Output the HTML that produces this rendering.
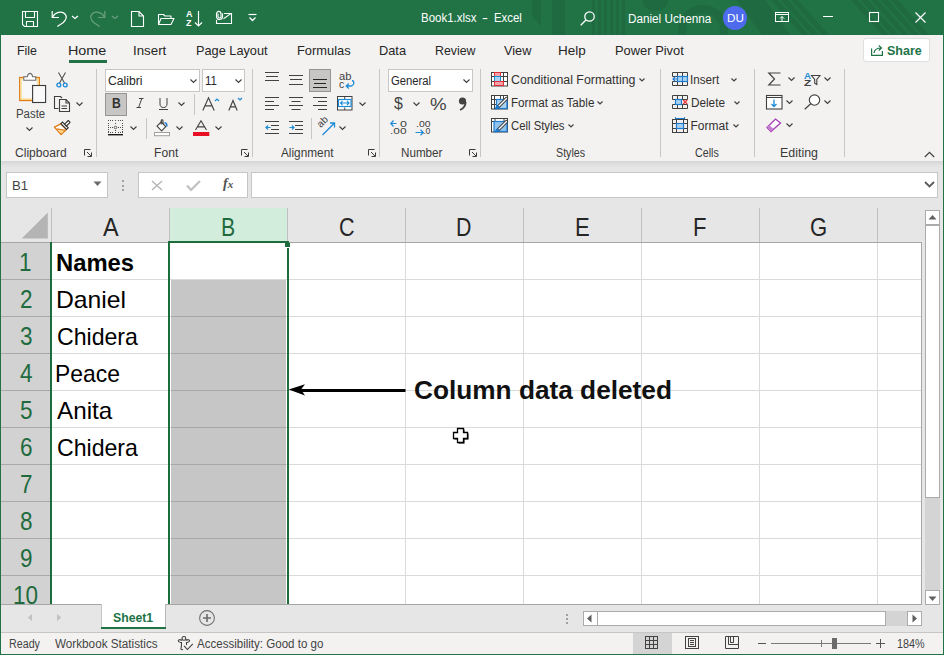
<!DOCTYPE html>
<html><head><meta charset="utf-8">
<style>
*{box-sizing:border-box;margin:0;padding:0}
html,body{width:944px;height:655px;overflow:hidden;background:#fff;font-family:"Liberation Sans",sans-serif;color:#262626;position:relative}
.a{position:absolute}
.t{white-space:nowrap}
svg{overflow:visible}
</style></head><body>

<div class="a" style="left:0px;top:0px;width:944px;height:35px;background:#217346;"></div>
<div class="a" style="left:1px;top:35px;width:942px;height:126px;background:#f3f2f1;"></div>
<div class="a" style="left:1px;top:161px;width:942px;height:47px;background:#e6e6e6;"></div>
<div class="a" style="left:1px;top:161px;width:942px;height:6px;background:linear-gradient(#d6d6d6,#e6e6e6);"></div>
<div class="a" style="left:1px;top:208px;width:942px;height:396px;background:#e6e6e6;"></div>
<div class="a" style="left:1px;top:604px;width:942px;height:28px;background:#e6e6e6;"></div>
<div class="a" style="left:1px;top:632px;width:942px;height:22px;background:#f3f2f1;"></div>
<svg class="a" style="left:0;top:0;overflow:hidden" width="944" height="35" viewBox="0 0 944 35">
<g fill="#1f6a40">
<path d="M532 0H541V26L532 16Z"/>
<rect x="552" y="0" width="13" height="35"/>
<rect x="592" y="0" width="3" height="35"/><rect x="598" y="0" width="3" height="35"/><rect x="604" y="0" width="3" height="35"/><rect x="610" y="0" width="3" height="35"/><rect x="616" y="0" width="3" height="35"/><rect x="622" y="0" width="3" height="35"/>
<path d="M642 0H668A13 11 0 0 1 642 0Z"/>
<path d="M737 0H765L790 35H762Z"/>
</g>
<g fill="none" stroke="#1f6a40" stroke-width="8"><circle cx="703" cy="30" r="21"/></g>
<g stroke="#1f6a40" stroke-width="5">
<path d="M770 -5L810 40 M780 -5L820 40 M790 -5L830 40 M850 -5L890 40 M860 -5L900 40 M870 -5L910 40 M880 -5L920 40 M890 -5L930 40"/>
</g>
</svg>
<svg class="a" style="left:22px;top:11px;" width="17" height="17" viewBox="0 0 17 17"><g fill="none" stroke="#ffffff" stroke-width="1.1"><path d="M0.5 0.5H15.5V15.5H2.5L0.5 13.5Z"/><path d="M3.5 0.5V6.5H12.5V0.5"/><path d="M4.5 15.5V10.5H11.5V15.5"/></g></svg>
<svg class="a" style="left:50px;top:10px;" width="20" height="18" viewBox="0 0 20 18"><g fill="none" stroke="#ffffff" stroke-width="1.2"><path d="M2.2 1V7.5H9"/><path d="M2.6 7.2C5 2 12 0.5 15 4C17.5 7 15.5 10.5 13 12.8L7.3 16.5"/></g></svg>
<svg class="a" style="left:71px;top:15px;" width="8" height="5" viewBox="0 0 8 5"><path d="M1 1L4 3.5L7 1" fill="none" stroke="#ffffff" stroke-width="1.3"/></svg>
<svg class="a" style="left:89px;top:10px;" width="20" height="18" viewBox="0 0 20 18"><g fill="none" stroke="#6a9e80" stroke-width="1.2"><path d="M15.8 1V7.5H9"/><path d="M15.4 7.2C13 2 6 0.5 3 4C0.5 7 2.5 10.5 5 12.8L10.7 16.5"/></g></svg>
<svg class="a" style="left:111px;top:15px;" width="8" height="5" viewBox="0 0 8 5"><path d="M1 1L4 3.5L7 1" fill="none" stroke="#6a9e80" stroke-width="1.3"/></svg>
<svg class="a" style="left:131px;top:11px;" width="13" height="17" viewBox="0 0 13 17"><path d="M0.5 0.5H8L12.5 5V15.5H0.5Z M8 0.5V5H12.5" fill="none" stroke="#ffffff" stroke-width="1.1"/></svg>
<svg class="a" style="left:158px;top:13px;" width="17" height="13" viewBox="0 0 17 13"><path d="M0.5 11.5V1.5H5.5L7 3H13V5.5 M0.5 11.5L3 5.5H16L13 11.5Z" fill="none" stroke="#ffffff" stroke-width="1.1" stroke-linejoin="round"/></svg>
<div class="a t" style="left:186px;top:10px;font-size:9px;line-height:9px;color:#fff;font-weight:bold">A</div>
<div class="a t" style="left:186px;top:19px;font-size:9px;line-height:9px;color:#fff;font-weight:bold">Z</div>
<svg class="a" style="left:194px;top:11px;" width="9" height="17" viewBox="0 0 9 17"><path d="M4.5 0V15 M1 11.5L4.5 15L8 11.5" fill="none" stroke="#ffffff" stroke-width="1.2"/></svg>
<svg class="a" style="left:216px;top:11px;" width="17" height="14" viewBox="0 0 17 14"><g fill="none" stroke="#ffffff" stroke-width="1.1"><path d="M8 2.5H15.5V12.5H0.5V9"/><path d="M7.5 7.8L14.8 2.6"/><path d="M6.5 2.3V5.5C6.5 7.5 5.3 8.5 3.5 8.5C1.7 8.5 0.5 7.5 0.5 5.5V3C0.5 1.2 1.5 0.4 2.8 0.4C4.1 0.4 5 1.2 5 3V5.6C5 6.5 4.4 7 3.5 7C2.6 7 2 6.5 2 5.6V2.5"/></g></svg>
<svg class="a" style="left:248px;top:13px;" width="9" height="9" viewBox="0 0 9 9"><path d="M0.5 1.5H8.5" stroke="#ffffff" stroke-width="1.2"/><path d="M1.5 4.5L4.5 7.5L7.5 4.5" fill="none" stroke="#ffffff" stroke-width="1.3"/></svg>
<div class="a t" style="left:420.78px;top:11.74px;font-size:12px;line-height:12px;color:#fff;transform:scaleX(0.9554);transform-origin:0 0;">Book1.xlsx</div>
<div class="a t" style="left:481.89px;top:11.74px;font-size:12px;line-height:12px;color:#fff;transform:scaleX(1.4966);transform-origin:0 0;">-</div>
<div class="a t" style="left:493.79px;top:11.74px;font-size:12px;line-height:12px;color:#fff;transform:scaleX(0.9493);transform-origin:0 0;">Excel</div>
<svg class="a" style="left:580px;top:11px;" width="15" height="15" viewBox="0 0 15 15"><g fill="none" stroke="#ffffff" stroke-width="1.3"><circle cx="9.5" cy="5.5" r="4.7"/><path d="M6.2 8.8L0.7 14.3"/></g></svg>
<div class="a t" style="left:628.46px;top:12.54px;font-size:12px;line-height:12px;color:#fff;transform:scaleX(0.9761);transform-origin:0 0;">Daniel Uchenna</div>
<div class="a" style="left:723px;top:6px;width:24px;height:24px;border-radius:50%;background:#4f6bed"></div>
<div class="a t" style="left:726.57px;top:13.19px;font-size:11px;line-height:11px;color:#fff;transform:scaleX(1.0612);transform-origin:0 0;">DU</div>
<svg class="a" style="left:775px;top:12px;" width="14" height="11" viewBox="0 0 14 11"><g fill="none" stroke="#ffffff" stroke-width="1"><rect x="0.5" y="0.5" width="13" height="9"/><path d="M0.5 2.5H13.5"/><path d="M7 9.5V4.5M5 6.5L7 4.5L9 6.5"/></g></svg>
<div class="a" style="left:823px;top:16px;width:10px;height:1px;background:#ffffff;"></div>
<svg class="a" style="left:869px;top:12px;" width="10" height="10" viewBox="0 0 10 10"><rect x="0.5" y="0.5" width="9" height="9" fill="none" stroke="#ffffff" stroke-width="1.1"/></svg>
<svg class="a" style="left:915px;top:12px;" width="11" height="11" viewBox="0 0 11 11"><path d="M0.5 0.5L10.5 10.5M10.5 0.5L0.5 10.5" stroke="#ffffff" stroke-width="1.2"/></svg>
<div class="a t" style="left:17.01px;top:44.19px;font-size:13px;line-height:13px;color:#262626;transform:scaleX(0.9499);transform-origin:0 0;">File</div>
<div class="a t" style="left:68.35px;top:44.19px;font-size:13px;line-height:13px;color:#262626;transform:scaleX(1.1032);transform-origin:0 0;">Home</div>
<div class="a" style="left:69px;top:60px;width:38px;height:3px;background:#217346;"></div>
<div class="a t" style="left:132.80px;top:44.19px;font-size:13px;line-height:13px;color:#262626;transform:scaleX(1.0235);transform-origin:0 0;">Insert</div>
<div class="a t" style="left:196.28px;top:44.19px;font-size:13px;line-height:13px;color:#262626;transform:scaleX(0.9807);transform-origin:0 0;">Page Layout</div>
<div class="a t" style="left:297.27px;top:44.19px;font-size:13px;line-height:13px;color:#262626;transform:scaleX(0.9902);transform-origin:0 0;">Formulas</div>
<div class="a t" style="left:379.48px;top:44.19px;font-size:13px;line-height:13px;color:#262626;transform:scaleX(0.9852);transform-origin:0 0;">Data</div>
<div class="a t" style="left:435.31px;top:44.19px;font-size:13px;line-height:13px;color:#262626;transform:scaleX(0.9495);transform-origin:0 0;">Review</div>
<div class="a t" style="left:503.94px;top:44.19px;font-size:13px;line-height:13px;color:#262626;transform:scaleX(0.9790);transform-origin:0 0;">View</div>
<div class="a t" style="left:558.42px;top:44.19px;font-size:13px;line-height:13px;color:#262626;transform:scaleX(1.0376);transform-origin:0 0;">Help</div>
<div class="a t" style="left:615.37px;top:44.19px;font-size:13px;line-height:13px;color:#262626;transform:scaleX(0.9919);transform-origin:0 0;">Power Pivot</div>
<div class="a" style="left:863px;top:38px;width:67px;height:24px;background:#fff;border:1px solid #e1dfdd;border-radius:3px"></div>
<svg class="a" style="left:871px;top:44px;" width="12" height="12" viewBox="0 0 12 12"><g fill="none" stroke="#217346" stroke-width="1.2"><path d="M0.6 4.5V11.4H11.4V7"/><path d="M3 9C3.5 5.5 6 4 10 4 M7.8 1.5L10.5 4L7.8 6.5"/></g></svg>
<div class="a t" style="left:886.62px;top:44.09px;font-size:13px;line-height:13px;color:#217346;font-weight:bold;transform:scaleX(0.9615);transform-origin:0 0;">Share</div>
<div class="a" style="left:96px;top:69px;width:1px;height:88px;background:#c8c6c4;"></div>
<div class="a" style="left:252px;top:69px;width:1px;height:88px;background:#c8c6c4;"></div>
<div class="a" style="left:379px;top:69px;width:1px;height:88px;background:#c8c6c4;"></div>
<div class="a" style="left:480px;top:69px;width:1px;height:88px;background:#c8c6c4;"></div>
<div class="a" style="left:660px;top:69px;width:1px;height:88px;background:#c8c6c4;"></div>
<div class="a" style="left:754px;top:69px;width:1px;height:88px;background:#c8c6c4;"></div>
<div class="a" style="left:844px;top:69px;width:1px;height:88px;background:#c8c6c4;"></div>
<svg class="a" style="left:18px;top:72px;" width="29" height="31" viewBox="0 0 29 31"><rect x="1.7" y="5.5" width="19.6" height="23" fill="#f8f8f8" stroke="#e07b16" stroke-width="1.3"/><rect x="3" y="6.8" width="17" height="20.4" fill="none" stroke="#fbd77f" stroke-width="1.3"/><path d="M5.8 8.2V4.8H9.3C9.8 2.2 10.8 1.4 12 1.4C13.2 1.4 14.2 2.2 14.7 4.8H17.8V8.2Z" fill="#fff" stroke="#6e6e6e" stroke-width="1.1"/><rect x="14.6" y="13.5" width="13" height="17" fill="#f9f9f9" stroke="#3a3a3a" stroke-width="1.1"/></svg>
<div class="a t" style="left:15.59px;top:107.54px;font-size:12px;line-height:12px;color:#424242;transform:scaleX(0.9514);transform-origin:0 0;">Paste</div>
<svg class="a" style="left:26.0px;top:127.25px;" width="7" height="4.5" viewBox="0 0 7 4.5"><path d="M0.5 0.5L3.5 3.5L6.5 0.5" fill="none" stroke="#424242" stroke-width="1.2"/></svg>
<svg class="a" style="left:56px;top:72px;" width="12" height="16" viewBox="0 0 12 16"><g fill="none" stroke="#505050" stroke-width="1.1"><path d="M2.5 0.5L8.5 11M9.5 0.5L3.5 11"/></g><g fill="none" stroke="#1e8bd6" stroke-width="1.4"><circle cx="2.8" cy="13" r="1.9"/><circle cx="9.2" cy="13" r="1.9"/></g></svg>
<svg class="a" style="left:54px;top:96px;" width="17" height="16" viewBox="0 0 17 16"><g fill="none" stroke="#404040" stroke-width="1.1"><path d="M4.5 12.5H0.5V0.5H6.5L8 2"/><path d="M5.5 3.5H12L15.5 7V15.5H5.5Z"/><path d="M12 3.5V7H15.5"/><path d="M7.5 10H13M7.5 12.5H13"/></g></svg>
<svg class="a" style="left:75.5px;top:102.25px;" width="7" height="4.5" viewBox="0 0 7 4.5"><path d="M0.5 0.5L3.5 3.5L6.5 0.5" fill="none" stroke="#424242" stroke-width="1.2"/></svg>
<svg class="a" style="left:50px;top:116px;" width="22" height="20" viewBox="0 0 22 20"><path d="M4.4 11.1L11.1 18.5L16.4 13.6L10.7 7.9Z" fill="#fff" stroke="#e07b16" stroke-width="1.3" stroke-linejoin="round"/><path d="M8.3 14.2L11.1 17.4L14.3 14.6Z" fill="#ffd47a"/><path d="M6.5 12.8L15.2 14.3" stroke="#e07b16" stroke-width="1.2"/><path d="M10.9 7.7L12.5 6.1L18.2 11.8L16.6 13.4Z" fill="#fff" stroke="#333" stroke-width="1.1"/><path d="M14.6 8.2L18.3 4.5L20.1 6.3L16.4 10Z" fill="#fff" stroke="#333" stroke-width="1.1" stroke-linejoin="round"/></svg>
<div class="a t" style="left:14.70px;top:146.64px;font-size:12px;line-height:12px;color:#3b3a39;transform:scaleX(1.0052);transform-origin:0 0;">Clipboard</div>
<svg class="a" style="left:84px;top:149px;" width="9" height="9" viewBox="0 0 9 9"><g fill="none" stroke="#3a3a3a" stroke-width="1"><path d="M0.5 6.5V0.5H6.5"/><path d="M3 3L7 7M7.5 3.5V7.5H3.5"/></g></svg>
<div class="a" style="left:105px;top:69px;width:95px;height:23px;background:#fff;border:1px solid #c8c6c4"></div>
<div class="a t" style="left:107.79px;top:75.04px;font-size:12px;line-height:12px;color:#262626;transform:scaleX(1.0160);transform-origin:0 0;">Calibri</div>
<svg class="a" style="left:190.0px;top:78.75px;" width="7" height="4.5" viewBox="0 0 7 4.5"><path d="M0.5 0.5L3.5 3.5L6.5 0.5" fill="none" stroke="#424242" stroke-width="1.2"/></svg>
<div class="a" style="left:202px;top:69px;width:43px;height:23px;background:#fff;border:1px solid #c8c6c4"></div>
<div class="a t" style="left:204.64px;top:75.04px;font-size:12px;line-height:12px;color:#262626;transform:scaleX(0.9563);transform-origin:0 0;">11</div>
<svg class="a" style="left:234.9px;top:78.75px;" width="7" height="4.5" viewBox="0 0 7 4.5"><path d="M0.5 0.5L3.5 3.5L6.5 0.5" fill="none" stroke="#424242" stroke-width="1.2"/></svg>
<div class="a" style="left:105px;top:93px;width:22px;height:23px;background:#c8c6c4;border:1px solid #979593"></div>
<div class="a t" style="left:111.71px;top:96.15px;font-size:14px;line-height:14px;color:#323130;font-weight:bold;transform:scaleX(0.8711);transform-origin:0 0;">B</div>
<svg class="a" style="left:136px;top:97px;" width="8" height="12" viewBox="0 0 8 12"><path d="M3 1.5H7.5 M0.5 10.5H5 M5.8 1.5L2.6 10.5" fill="none" stroke="#424242" stroke-width="1"/></svg>
<svg class="a" style="left:159px;top:97px;" width="10" height="14" viewBox="0 0 10 14"><path d="M1 1V7C1 9.3 2.3 10.5 4.5 10.5C6.7 10.5 8 9.3 8 7V1" fill="none" stroke="#424242" stroke-width="1"/><path d="M0 12.5H9" stroke="#424242" stroke-width="1"/></svg>
<svg class="a" style="left:178.1px;top:102.25px;" width="7" height="4.5" viewBox="0 0 7 4.5"><path d="M0.5 0.5L3.5 3.5L6.5 0.5" fill="none" stroke="#424242" stroke-width="1.2"/></svg>
<div class="a" style="left:194px;top:94px;width:1px;height:21px;background:#c8c6c4;"></div>
<svg class="a" style="left:202px;top:97px;" width="18" height="14" viewBox="0 0 18 14"><path d="M0.8 13.5L6.5 0.8L12.2 13.5M3 8.8H10" fill="none" stroke="#424242" stroke-width="1.15"/><path d="M13 4L15 2L17 4" fill="none" stroke="#1e8bd6" stroke-width="1.2"/></svg>
<svg class="a" style="left:228px;top:97px;" width="15" height="14" viewBox="0 0 15 14"><path d="M0.8 13.5L5 3.5L9.2 13.5M2.5 9.8H7.5" fill="none" stroke="#424242" stroke-width="1.15"/><path d="M10 1L12 3L14 1" fill="none" stroke="#1e8bd6" stroke-width="1.2"/></svg>
<svg class="a" style="left:108px;top:120px;" width="16" height="16" viewBox="0 0 16 16"><g fill="#505050"><rect x="0" y="0" width="1" height="1"/><rect x="2" y="0" width="1" height="1"/><rect x="4" y="0" width="1" height="1"/><rect x="7" y="0" width="1" height="1"/><rect x="10" y="0" width="1" height="1"/><rect x="12" y="0" width="1" height="1"/><rect x="14" y="0" width="1" height="1"/><rect x="0" y="3" width="1" height="1"/><rect x="0" y="5" width="1" height="1"/><rect x="0" y="9" width="1" height="1"/><rect x="0" y="11" width="1" height="1"/><rect x="14" y="3" width="1" height="1"/><rect x="14" y="5" width="1" height="1"/><rect x="14" y="9" width="1" height="1"/><rect x="14" y="11" width="1" height="1"/><rect x="7" y="3" width="1" height="1"/><rect x="7" y="10" width="1" height="1"/><rect x="7" y="12" width="1" height="1"/><rect x="2" y="7" width="1" height="1"/><rect x="4" y="7" width="1" height="1"/><rect x="10" y="7" width="1" height="1"/><rect x="12" y="7" width="1" height="1"/><rect x="0" y="7" width="1" height="1"/><rect x="14" y="7" width="1" height="1"/><rect x="2" y="12" width="1" height="1"/><rect x="4" y="12" width="1" height="1"/><rect x="10" y="12" width="1" height="1"/><rect x="12" y="12" width="1" height="1"/><rect x="0" y="12" width="1" height="1"/><rect x="14" y="12" width="1" height="1"/></g><circle cx="7.5" cy="7.5" r="1.3" fill="none" stroke="#505050" stroke-width="0.9"/><rect x="0" y="14" width="15" height="1.4" fill="#1a1a1a"/></svg>
<svg class="a" style="left:129.8px;top:125.75px;" width="7" height="4.5" viewBox="0 0 7 4.5"><path d="M0.5 0.5L3.5 3.5L6.5 0.5" fill="none" stroke="#424242" stroke-width="1.2"/></svg>
<div class="a" style="left:146px;top:118px;width:1px;height:21px;background:#c8c6c4;"></div>
<svg class="a" style="left:154px;top:119px;" width="17" height="18" viewBox="0 0 17 18"><path d="M3 7.2L7.2 3L11.8 7.6L7.6 11.8Z" fill="#fff" stroke="#404040" stroke-width="1.1" stroke-linejoin="round"/><path d="M7.2 5.5V1.7C7.2 0.6 9 0.6 9 1.7V5" fill="none" stroke="#404040" stroke-width="1.1"/><path d="M10.5 4C12.5 3.5 13 5.5 12.8 7.5" fill="none" stroke="#1e7bd0" stroke-width="1.5"/><rect x="0.5" y="13.5" width="15" height="3.2" fill="#fff" stroke="#a19f9d" stroke-width="1"/></svg>
<svg class="a" style="left:175.9px;top:125.75px;" width="7" height="4.5" viewBox="0 0 7 4.5"><path d="M0.5 0.5L3.5 3.5L6.5 0.5" fill="none" stroke="#424242" stroke-width="1.2"/></svg>
<svg class="a" style="left:193px;top:120px;" width="17" height="17" viewBox="0 0 17 17"><path d="M2.5 10L8 0.8L13.5 10M4.5 6.8H11.5" fill="none" stroke="#424242" stroke-width="1.15"/><rect x="0" y="12" width="16.3" height="4" fill="#e81123"/></svg>
<svg class="a" style="left:214.9px;top:125.75px;" width="7" height="4.5" viewBox="0 0 7 4.5"><path d="M0.5 0.5L3.5 3.5L6.5 0.5" fill="none" stroke="#424242" stroke-width="1.2"/></svg>
<div class="a t" style="left:153.53px;top:146.64px;font-size:12px;line-height:12px;color:#3b3a39;transform:scaleX(1.0096);transform-origin:0 0;">Font</div>
<svg class="a" style="left:241px;top:149px;" width="9" height="9" viewBox="0 0 9 9"><g fill="none" stroke="#3a3a3a" stroke-width="1"><path d="M0.5 6.5V0.5H6.5"/><path d="M3 3L7 7M7.5 3.5V7.5H3.5"/></g></svg>
<svg class="a" style="left:265px;top:72px;" width="15" height="12" viewBox="0 0 15 12"><rect x="0" y="0" width="14" height="1" fill="#424242"/><rect x="1" y="4" width="12" height="1" fill="#424242"/><rect x="0" y="8" width="14" height="1" fill="#424242"/></svg>
<svg class="a" style="left:289px;top:75px;" width="15" height="12" viewBox="0 0 15 12"><rect x="0" y="0" width="14" height="1" fill="#424242"/><rect x="1" y="4" width="12" height="1" fill="#424242"/><rect x="0" y="9" width="14" height="1" fill="#424242"/></svg>
<div class="a" style="left:309px;top:69px;width:22px;height:23px;background:#c8c6c4;border:1px solid #979593"></div>
<svg class="a" style="left:313px;top:79px;" width="15" height="12" viewBox="0 0 15 12"><rect x="0" y="0" width="14" height="1" fill="#262626"/><rect x="1" y="4" width="12" height="1" fill="#262626"/><rect x="0" y="8" width="14" height="1" fill="#262626"/></svg>
<div class="a t" style="left:339.05px;top:71.53px;font-size:10px;line-height:10px;color:#424242;transform:scaleX(1.1165);transform-origin:0 0;">ab</div>
<div class="a t" style="left:339.09px;top:79.53px;font-size:10px;line-height:10px;color:#424242;transform:scaleX(1.0345);transform-origin:0 0;">c</div>
<svg class="a" style="left:345px;top:80px;" width="10" height="9" viewBox="0 0 10 9"><path d="M7 0.5C9.5 1 9.5 5 6.5 6H1.5 M3.8 3.5L1.2 6L3.8 8.5" fill="none" stroke="#1e8bd6" stroke-width="1.3"/></svg>
<svg class="a" style="left:265px;top:97px;" width="15" height="15" viewBox="0 0 15 15"><rect x="0" y="0" width="14" height="1" fill="#424242"/><rect x="0" y="4" width="9" height="1" fill="#424242"/><rect x="0" y="8" width="14" height="1" fill="#424242"/><rect x="0" y="12" width="9" height="1" fill="#424242"/></svg>
<svg class="a" style="left:289px;top:97px;" width="15" height="15" viewBox="0 0 15 15"><rect x="0" y="0" width="14" height="1" fill="#424242"/><rect x="2.5" y="4" width="9" height="1" fill="#424242"/><rect x="0" y="8" width="14" height="1" fill="#424242"/><rect x="2.5" y="12" width="9" height="1" fill="#424242"/></svg>
<svg class="a" style="left:313px;top:97px;" width="15" height="15" viewBox="0 0 15 15"><rect x="0" y="0" width="14" height="1" fill="#424242"/><rect x="5" y="4" width="9" height="1" fill="#424242"/><rect x="0" y="8" width="14" height="1" fill="#424242"/><rect x="5" y="12" width="9" height="1" fill="#424242"/></svg>
<svg class="a" style="left:337px;top:96px;" width="16" height="15" viewBox="0 0 16 15"><rect x="0.5" y="0.5" width="14.5" height="13.5" fill="#fff" stroke="#404040" stroke-width="1"/><path d="M7.75 0.5V3 M7.75 11.5V14" stroke="#404040"/><rect x="1.5" y="3.5" width="12.5" height="7" fill="none" stroke="#1e8bd6" stroke-width="1.2"/><path d="M3.5 7H12 M5.5 5L3.5 7L5.5 9 M10 5L12 7L10 9" fill="none" stroke="#1e8bd6" stroke-width="1.1"/></svg>
<svg class="a" style="left:359.2px;top:102.25px;" width="7" height="4.5" viewBox="0 0 7 4.5"><path d="M0.5 0.5L3.5 3.5L6.5 0.5" fill="none" stroke="#424242" stroke-width="1.2"/></svg>
<svg class="a" style="left:265px;top:121px;" width="15" height="14" viewBox="0 0 15 14"><rect x="0" y="0" width="14" height="1" fill="#424242"/><rect x="6" y="4" width="8" height="1" fill="#424242"/><rect x="6" y="8" width="8" height="1" fill="#424242"/><rect x="0" y="12" width="14" height="1" fill="#424242"/><path d="M1 6.5H5.5 M3 4.5L1 6.5L3 8.5" fill="none" stroke="#1e8bd6" stroke-width="1.2"/></svg>
<svg class="a" style="left:289px;top:121px;" width="15" height="14" viewBox="0 0 15 14"><rect x="0" y="0" width="14" height="1" fill="#424242"/><rect x="6" y="4" width="8" height="1" fill="#424242"/><rect x="6" y="8" width="8" height="1" fill="#424242"/><rect x="0" y="12" width="14" height="1" fill="#424242"/><path d="M0.5 6.5H5 M3 4.5L5 6.5L3 8.5" fill="none" stroke="#1e8bd6" stroke-width="1.2"/></svg>
<div class="a" style="left:311px;top:118px;width:1px;height:21px;background:#c8c6c4;"></div>
<div class="a t" style="left:317px;top:117px;font-size:10px;line-height:10px;color:#424242;transform:rotate(-45deg);transform-origin:50% 50%">ab</div>
<svg class="a" style="left:322px;top:122px;" width="14" height="14" viewBox="0 0 14 14"><path d="M0.5 13L12.5 1 M8 1H12.5V5.5" fill="none" stroke="#1e8bd6" stroke-width="1.3"/></svg>
<svg class="a" style="left:338.9px;top:125.75px;" width="7" height="4.5" viewBox="0 0 7 4.5"><path d="M0.5 0.5L3.5 3.5L6.5 0.5" fill="none" stroke="#424242" stroke-width="1.2"/></svg>
<div class="a t" style="left:281.30px;top:146.64px;font-size:12px;line-height:12px;color:#3b3a39;transform:scaleX(0.9835);transform-origin:0 0;">Alignment</div>
<svg class="a" style="left:368px;top:149px;" width="9" height="9" viewBox="0 0 9 9"><g fill="none" stroke="#3a3a3a" stroke-width="1"><path d="M0.5 6.5V0.5H6.5"/><path d="M3 3L7 7M7.5 3.5V7.5H3.5"/></g></svg>
<div class="a" style="left:388px;top:69px;width:85px;height:23px;background:#fff;border:1px solid #c8c6c4"></div>
<div class="a t" style="left:391.14px;top:75.34px;font-size:12px;line-height:12px;color:#262626;transform:scaleX(0.9399);transform-origin:0 0;">General</div>
<svg class="a" style="left:462.9px;top:78.75px;" width="7" height="4.5" viewBox="0 0 7 4.5"><path d="M0.5 0.5L3.5 3.5L6.5 0.5" fill="none" stroke="#424242" stroke-width="1.2"/></svg>
<div class="a t" style="left:394.14px;top:95.95px;font-size:16px;line-height:16px;color:#424242;transform:scaleX(0.9906);transform-origin:0 0;">$</div>
<svg class="a" style="left:413.0px;top:102.25px;" width="7" height="4.5" viewBox="0 0 7 4.5"><path d="M0.5 0.5L3.5 3.5L6.5 0.5" fill="none" stroke="#424242" stroke-width="1.2"/></svg>
<div class="a t" style="left:429.55px;top:97.05px;font-size:16px;line-height:16px;color:#424242;transform:scaleX(1.1662);transform-origin:0 0;">%</div>
<svg class="a" style="left:458px;top:97px;" width="9" height="14" viewBox="0 0 9 14"><circle cx="4.5" cy="4" r="3.6" fill="#424242"/><path d="M7.6 5C7.6 9 5.5 11.5 2 13" fill="none" stroke="#424242" stroke-width="1.8"/></svg>
<svg class="a" style="left:390px;top:119px;" width="17" height="17" viewBox="0 0 17 17"><path d="M1 4.5H6.5 M3.5 1.5L0.8 4.5L3.5 7.5" fill="none" stroke="#1e8bd6" stroke-width="1.2"/></svg>
<div class="a t" style="left:400.00px;top:119.88px;font-size:9px;line-height:9px;color:#424242;transform:scaleX(1.3889);transform-origin:0 0;">0</div>
<div class="a t" style="left:390.43px;top:127.38px;font-size:9px;line-height:9px;color:#424242;transform:scaleX(1.3175);transform-origin:0 0;">.00</div>
<div class="a t" style="left:416.06px;top:119.88px;font-size:9px;line-height:9px;color:#424242;transform:scaleX(1.1594);transform-origin:0 0;">.00</div>
<svg class="a" style="left:415px;top:129px;" width="12" height="8" viewBox="0 0 12 8"><path d="M0.5 3.5H8 M5.5 0.8L8.3 3.5L5.5 6.2" fill="none" stroke="#1e8bd6" stroke-width="1.2"/></svg>
<div class="a t" style="left:423.21px;top:127.38px;font-size:9px;line-height:9px;color:#424242;transform:scaleX(0.9703);transform-origin:0 0;">.0</div>
<div class="a t" style="left:400.67px;top:146.64px;font-size:12px;line-height:12px;color:#3b3a39;transform:scaleX(0.9716);transform-origin:0 0;">Number</div>
<svg class="a" style="left:469px;top:149px;" width="9" height="9" viewBox="0 0 9 9"><g fill="none" stroke="#3a3a3a" stroke-width="1"><path d="M0.5 6.5V0.5H6.5"/><path d="M3 3L7 7M7.5 3.5V7.5H3.5"/></g></svg>
<svg class="a" style="left:491px;top:72px;" width="17" height="15" viewBox="0 0 17 15"><rect x="0.5" y="0.5" width="16" height="13.5" fill="#fff" stroke="#404040" stroke-width="1"/><path d="M0.5 4.5H16 M0.5 9.5H16 M3.5 0.5V14 M9.5 0.5V14 M12.5 0.5V14" stroke="#404040" stroke-width="1" fill="none"/><rect x="3.5" y="0.5" width="6" height="4" fill="#f4a0a8" stroke="#e02f3a" stroke-width="1"/><rect x="3.5" y="4.5" width="6" height="5" fill="#a9d2f2" stroke="#1e8bd6" stroke-width="1"/><rect x="3.5" y="9.5" width="9" height="4" fill="#f4a0a8" stroke="#e02f3a" stroke-width="1"/></svg>
<div class="a t" style="left:510.88px;top:73.84px;font-size:12px;line-height:12px;color:#323130;transform:scaleX(1.0310);transform-origin:0 0;">Conditional Formatting</div>
<svg class="a" style="left:638.8px;top:77.5px;" width="6" height="4.0" viewBox="0 0 6 4.0"><path d="M0.5 0.5L3.0 3.0L5.5 0.5" fill="none" stroke="#424242" stroke-width="1.2"/></svg>
<svg class="a" style="left:491px;top:95px;" width="17" height="15" viewBox="0 0 17 15"><rect x="0.5" y="0.5" width="16" height="13.5" fill="#fff" stroke="#404040" stroke-width="1"/><path d="M0.5 4.5H16 M0.5 9.5H16 M3.5 0.5V14 M9.5 0.5V14 M12.5 0.5V14" stroke="#404040" stroke-width="1" fill="none"/><rect x="5.5" y="4.5" width="10.5" height="9" fill="#a9d2f2" stroke="#1e7bd0" stroke-width="1.2"/><path d="M15.5 3.5L7 12" stroke="#404040" stroke-width="3.2" stroke-linecap="round"/><path d="M15.5 3.5L7 12" stroke="#fff" stroke-width="1.2" stroke-linecap="round"/><path d="M7.5 10.5C5 10.5 4.5 12 3.5 14.5C5.5 14.5 8.5 14 8.5 11.5Z" fill="#1e7bd0"/></svg>
<div class="a t" style="left:510.57px;top:96.84px;font-size:12px;line-height:12px;color:#323130;transform:scaleX(0.9720);transform-origin:0 0;">Format as Table</div>
<svg class="a" style="left:596.8px;top:100.5px;" width="6" height="4.0" viewBox="0 0 6 4.0"><path d="M0.5 0.5L3.0 3.0L5.5 0.5" fill="none" stroke="#424242" stroke-width="1.2"/></svg>
<svg class="a" style="left:491px;top:118px;" width="17" height="15" viewBox="0 0 17 15"><rect x="0.5" y="0.5" width="16" height="13.5" fill="#fff" stroke="#404040" stroke-width="1"/><path d="M0.5 3.5H16" stroke="#404040"/><path d="M4 0.5V3.5M13 0.5V3.5" stroke="#404040"/><rect x="3" y="3.5" width="13" height="10" fill="#8ec4ee" stroke="#1e7bd0" stroke-width="1.2"/><path d="M15.5 3.5L7 12" stroke="#404040" stroke-width="3.2" stroke-linecap="round"/><path d="M15.5 3.5L7 12" stroke="#fff" stroke-width="1.2" stroke-linecap="round"/><path d="M7.5 10.5C5 10.5 4.5 12 3.5 14.5C5.5 14.5 8.5 14 8.5 11.5Z" fill="#1e7bd0"/></svg>
<div class="a t" style="left:510.93px;top:119.84px;font-size:12px;line-height:12px;color:#323130;transform:scaleX(0.9429);transform-origin:0 0;">Cell Styles</div>
<svg class="a" style="left:568.2px;top:123.5px;" width="6" height="4.0" viewBox="0 0 6 4.0"><path d="M0.5 0.5L3.0 3.0L5.5 0.5" fill="none" stroke="#424242" stroke-width="1.2"/></svg>
<div class="a t" style="left:555.82px;top:146.64px;font-size:12px;line-height:12px;color:#3b3a39;transform:scaleX(0.8916);transform-origin:0 0;">Styles</div>
<svg class="a" style="left:672px;top:72px;" width="16" height="14" viewBox="0 0 16 14"><g fill="none" stroke="#404040" stroke-width="1"><path d="M0.5 4.5V0.5H15.5V13.5H0.5V9.5 M0.5 4.5H15.5 M0.5 9.5H15.5 M5.5 0.5V4.5 M10.5 0.5V4.5 M5.5 9.5V13.5 M10.5 9.5V13.5"/></g><rect x="5.5" y="4.5" width="10" height="5" fill="#a9d2f2" stroke="#1e7bd0" stroke-width="1.2"/><path d="M10.5 4.5V9.5" stroke="#1e7bd0"/><path d="M1 7H6 M3.6 4.4L1 7L3.6 9.6" fill="none" stroke="#1e7bd0" stroke-width="1.2"/></svg>
<div class="a t" style="left:690.45px;top:73.64px;font-size:12px;line-height:12px;color:#323130;transform:scaleX(0.9702);transform-origin:0 0;">Insert</div>
<svg class="a" style="left:730.7px;top:77.5px;" width="6" height="4.0" viewBox="0 0 6 4.0"><path d="M0.5 0.5L3.0 3.0L5.5 0.5" fill="none" stroke="#424242" stroke-width="1.2"/></svg>
<svg class="a" style="left:672px;top:95px;" width="16" height="14" viewBox="0 0 16 14"><g fill="none" stroke="#404040" stroke-width="1"><path d="M0.5 4.5V0.5H15.5V4.5 M0.5 9.5V13.5H15.5V9.5 M0.5 4.5H15.5 M0.5 9.5H15.5 M5.5 0.5V4.5 M10.5 0.5V4.5 M5.5 9.5V13.5 M10.5 9.5V13.5"/></g><rect x="3.5" y="4.5" width="6" height="5" fill="#a9d2f2" stroke="#1e7bd0" stroke-width="1.2"/><path d="M11.2 5L15.2 9 M15.2 5L11.2 9" stroke="#e8383d" stroke-width="1.3"/></svg>
<div class="a t" style="left:690.56px;top:96.64px;font-size:12px;line-height:12px;color:#323130;transform:scaleX(0.9777);transform-origin:0 0;">Delete</div>
<svg class="a" style="left:734.3px;top:100.5px;" width="6" height="4.0" viewBox="0 0 6 4.0"><path d="M0.5 0.5L3.0 3.0L5.5 0.5" fill="none" stroke="#424242" stroke-width="1.2"/></svg>
<svg class="a" style="left:672px;top:117px;" width="16" height="16" viewBox="0 0 16 16"><path d="M3 1.5H13 M3.5 0V3 M12.5 0V3" stroke="#1e7bd0" stroke-width="1"/><g fill="none" stroke="#404040" stroke-width="1"><rect x="0.5" y="2.5" width="15" height="13"/><path d="M0.5 6.5H15.5 M0.5 11.5H15.5 M4.5 2.5V15.5 M11.5 2.5V15.5"/></g><rect x="4.5" y="6.5" width="7" height="5" fill="#a9d2f2" stroke="#1e7bd0" stroke-width="1.2"/></svg>
<div class="a t" style="left:690.54px;top:119.84px;font-size:12px;line-height:12px;color:#323130;">Format</div>
<svg class="a" style="left:732.5px;top:123.5px;" width="6" height="4.0" viewBox="0 0 6 4.0"><path d="M0.5 0.5L3.0 3.0L5.5 0.5" fill="none" stroke="#424242" stroke-width="1.2"/></svg>
<div class="a t" style="left:694.96px;top:146.64px;font-size:12px;line-height:12px;color:#3b3a39;transform:scaleX(0.8917);transform-origin:0 0;">Cells</div>
<svg class="a" style="left:768px;top:72px;" width="13" height="14" viewBox="0 0 13 14"><path d="M12.5 1H0.8L6.5 7L0.8 13H12.5" fill="none" stroke="#424242" stroke-width="1.2"/></svg>
<svg class="a" style="left:787.7px;top:77.25px;" width="7" height="4.5" viewBox="0 0 7 4.5"><path d="M0.5 0.5L3.5 3.5L6.5 0.5" fill="none" stroke="#424242" stroke-width="1.2"/></svg>
<div class="a t" style="left:804.26px;top:71.88px;font-size:9px;line-height:9px;color:#1e8bd6;font-weight:bold;transform:scaleX(1.0779);transform-origin:0 0;">A</div>
<div class="a t" style="left:803.65px;top:79.38px;font-size:9px;line-height:9px;color:#424242;font-weight:bold;transform:scaleX(1.3013);transform-origin:0 0;">Z</div>
<svg class="a" style="left:811px;top:75px;" width="10" height="10" viewBox="0 0 10 10"><path d="M0.5 0.5H9L5.8 4.5V9.5L3.7 8.2V4.5Z" fill="none" stroke="#424242" stroke-width="1.1"/></svg>
<svg class="a" style="left:824.1px;top:77.25px;" width="7" height="4.5" viewBox="0 0 7 4.5"><path d="M0.5 0.5L3.5 3.5L6.5 0.5" fill="none" stroke="#424242" stroke-width="1.2"/></svg>
<svg class="a" style="left:766px;top:95px;" width="17" height="15" viewBox="0 0 17 15"><rect x="0.5" y="0.5" width="15.5" height="13.5" fill="#fff" stroke="#404040" stroke-width="1.1"/><path d="M0.5 2.5H16" stroke="#404040"/><path d="M8 4.5V11.5 M5.5 9L8 11.5L10.5 9" fill="none" stroke="#1e8bd6" stroke-width="1.3"/></svg>
<svg class="a" style="left:785.9px;top:100.25px;" width="7" height="4.5" viewBox="0 0 7 4.5"><path d="M0.5 0.5L3.5 3.5L6.5 0.5" fill="none" stroke="#424242" stroke-width="1.2"/></svg>
<svg class="a" style="left:804px;top:94px;" width="17" height="16" viewBox="0 0 17 16"><circle cx="10.5" cy="6" r="5.2" fill="#fff" stroke="#424242" stroke-width="1.15"/><path d="M7 9.5L0.7 15.3" stroke="#424242" stroke-width="1.2"/></svg>
<svg class="a" style="left:824.1px;top:100.25px;" width="7" height="4.5" viewBox="0 0 7 4.5"><path d="M0.5 0.5L3.5 3.5L6.5 0.5" fill="none" stroke="#424242" stroke-width="1.2"/></svg>
<svg class="a" style="left:766px;top:117px;" width="16" height="16" viewBox="0 0 16 16"><path d="M5 14.5L1 10.5L9.5 2L14.5 6Z" fill="#fff" stroke="#a43bb5" stroke-width="1.3"/><path d="M1 10.5L5 14.5L7.5 12L3.5 8Z" fill="#c47fd0"/></svg>
<svg class="a" style="left:785.9px;top:123.25px;" width="7" height="4.5" viewBox="0 0 7 4.5"><path d="M0.5 0.5L3.5 3.5L6.5 0.5" fill="none" stroke="#424242" stroke-width="1.2"/></svg>
<div class="a t" style="left:780.31px;top:146.64px;font-size:12px;line-height:12px;color:#3b3a39;transform:scaleX(1.0349);transform-origin:0 0;">Editing</div>
<svg class="a" style="left:924px;top:151px;" width="12" height="7" viewBox="0 0 12 7"><path d="M0.8 6L5.5 1.3L10.2 6" fill="none" stroke="#424242" stroke-width="1.2"/></svg>
<div class="a" style="left:6px;top:172px;width:102px;height:26px;background:#fff;border:1px solid #c6c6c6"></div>
<div class="a t" style="left:12.35px;top:179.64px;font-size:12px;line-height:12px;color:#444444;transform:scaleX(1.0959);transform-origin:0 0;">B1</div>
<svg class="a" style="left:93px;top:181px;" width="9" height="6" viewBox="0 0 9 6"><path d="M0.5 0.5H8.5L4.5 5Z" fill="#6b6b6b"/></svg>
<div class="a" style="left:122px;top:180px;width:2px;height:2px;background:#a0a0a0;"></div>
<div class="a" style="left:122px;top:184.5px;width:2px;height:2px;background:#a0a0a0;"></div>
<div class="a" style="left:122px;top:189px;width:2px;height:2px;background:#a0a0a0;"></div>
<div class="a" style="left:138px;top:172px;width:110px;height:26px;background:#fff;border:1px solid #c6c6c6"></div>
<svg class="a" style="left:151px;top:180px;" width="12" height="11" viewBox="0 0 12 11"><path d="M1 1L11 10M11 1L1 10" stroke="#b4b4b4" stroke-width="1.4"/></svg>
<svg class="a" style="left:186px;top:180px;" width="15" height="11" viewBox="0 0 15 11"><path d="M1 5.5L5 10L14 1" fill="none" stroke="#c0c0c0" stroke-width="2.2"/></svg>
<div class="a t" style="left:223px;top:176px;font-family:'Liberation Serif',serif;font-style:italic;font-weight:bold;font-size:14px;line-height:16px;color:#505050">f<span style="font-size:11px">x</span></div>
<div class="a" style="left:251px;top:172px;width:687px;height:26px;background:#fff;border:1px solid #c6c6c6"></div>
<svg class="a" style="left:924px;top:181px;" width="11" height="7" viewBox="0 0 11 7"><path d="M1 1L5.5 5.5L10 1" fill="none" stroke="#5a5a5a" stroke-width="1.8"/></svg>
<div class="a" style="left:52px;top:243px;width:869px;height:361px;background:#ffffff;"></div>
<div class="a" style="left:1px;top:243px;width:49px;height:361px;background:#d2d2d2;"></div>
<svg class="a" style="left:21px;top:212px;" width="27" height="27" viewBox="0 0 27 27"><path d="M26.8 0.4V26.6H0.7Z" fill="#b4b4b4"/></svg>
<div class="a" style="left:170px;top:208px;width:117px;height:34px;background:#d3eddd;"></div>
<div class="a" style="left:51px;top:208px;width:1px;height:34px;background:#c0c0c0;"></div>
<div class="a" style="left:169px;top:208px;width:1px;height:34px;background:#c0c0c0;"></div>
<div class="a" style="left:287px;top:208px;width:1px;height:34px;background:#c0c0c0;"></div>
<div class="a" style="left:405px;top:208px;width:1px;height:34px;background:#c0c0c0;"></div>
<div class="a" style="left:523px;top:208px;width:1px;height:34px;background:#c0c0c0;"></div>
<div class="a" style="left:641px;top:208px;width:1px;height:34px;background:#c0c0c0;"></div>
<div class="a" style="left:759px;top:208px;width:1px;height:34px;background:#c0c0c0;"></div>
<div class="a" style="left:877px;top:208px;width:1px;height:34px;background:#c0c0c0;"></div>
<div class="a" style="left:1px;top:242px;width:920px;height:1px;background:#a6a6a6;"></div>
<div class="a" style="left:52px;top:279px;width:869px;height:1px;background:#dadada;"></div>
<div class="a" style="left:1px;top:279px;width:49px;height:1px;background:#a9a9a9;"></div>
<div class="a" style="left:52px;top:316px;width:869px;height:1px;background:#dadada;"></div>
<div class="a" style="left:1px;top:316px;width:49px;height:1px;background:#a9a9a9;"></div>
<div class="a" style="left:52px;top:353px;width:869px;height:1px;background:#dadada;"></div>
<div class="a" style="left:1px;top:353px;width:49px;height:1px;background:#a9a9a9;"></div>
<div class="a" style="left:52px;top:390px;width:869px;height:1px;background:#dadada;"></div>
<div class="a" style="left:1px;top:390px;width:49px;height:1px;background:#a9a9a9;"></div>
<div class="a" style="left:52px;top:427px;width:869px;height:1px;background:#dadada;"></div>
<div class="a" style="left:1px;top:427px;width:49px;height:1px;background:#a9a9a9;"></div>
<div class="a" style="left:52px;top:464px;width:869px;height:1px;background:#dadada;"></div>
<div class="a" style="left:1px;top:464px;width:49px;height:1px;background:#a9a9a9;"></div>
<div class="a" style="left:52px;top:501px;width:869px;height:1px;background:#dadada;"></div>
<div class="a" style="left:1px;top:501px;width:49px;height:1px;background:#a9a9a9;"></div>
<div class="a" style="left:52px;top:538px;width:869px;height:1px;background:#dadada;"></div>
<div class="a" style="left:1px;top:538px;width:49px;height:1px;background:#a9a9a9;"></div>
<div class="a" style="left:52px;top:575px;width:869px;height:1px;background:#dadada;"></div>
<div class="a" style="left:1px;top:575px;width:49px;height:1px;background:#a9a9a9;"></div>
<div class="a" style="left:169px;top:243px;width:1px;height:361px;background:#dadada;"></div>
<div class="a" style="left:287px;top:243px;width:1px;height:361px;background:#dadada;"></div>
<div class="a" style="left:405px;top:243px;width:1px;height:361px;background:#dadada;"></div>
<div class="a" style="left:523px;top:243px;width:1px;height:361px;background:#dadada;"></div>
<div class="a" style="left:641px;top:243px;width:1px;height:361px;background:#dadada;"></div>
<div class="a" style="left:759px;top:243px;width:1px;height:361px;background:#dadada;"></div>
<div class="a" style="left:877px;top:243px;width:1px;height:361px;background:#dadada;"></div>
<div class="a" style="left:921px;top:242px;width:1px;height:363px;background:#a6a6a6;"></div>
<div class="a" style="left:1px;top:604px;width:921px;height:1px;background:#a6a6a6;"></div>
<div class="a" style="left:171px;top:280px;width:115px;height:324px;background:#c6c6c6;"></div>
<div class="a" style="left:171px;top:316px;width:115px;height:1px;background:#a8a8a8;"></div>
<div class="a" style="left:171px;top:353px;width:115px;height:1px;background:#a8a8a8;"></div>
<div class="a" style="left:171px;top:390px;width:115px;height:1px;background:#a8a8a8;"></div>
<div class="a" style="left:171px;top:427px;width:115px;height:1px;background:#a8a8a8;"></div>
<div class="a" style="left:171px;top:464px;width:115px;height:1px;background:#a8a8a8;"></div>
<div class="a" style="left:171px;top:501px;width:115px;height:1px;background:#a8a8a8;"></div>
<div class="a" style="left:171px;top:538px;width:115px;height:1px;background:#a8a8a8;"></div>
<div class="a" style="left:171px;top:575px;width:115px;height:1px;background:#a8a8a8;"></div>
<div class="a" style="left:50px;top:242px;width:2px;height:362px;background:#1b6e3c;"></div>
<div class="a" style="left:168px;top:241px;width:121px;height:2px;background:#1b6e3c;"></div>
<div class="a" style="left:168px;top:241px;width:2px;height:363px;background:#1b6e3c;"></div>
<div class="a" style="left:287px;top:248px;width:2px;height:356px;background:#1b6e3c;"></div>
<div class="a" style="left:285px;top:243px;width:5px;height:4px;background:#1b6e3c;"></div>
<div class="a" style="left:286px;top:247px;width:4px;height:1px;background:#ffffff;"></div>
<div class="a" style="left:287px;top:243px;width:2px;height:5px;background:#1b6e3c;"></div>
<div class="a" style="left:286px;top:247px;width:3px;height:1px;background:#ffffff;"></div>
<div class="a t" style="left:102.72px;top:213.59px;font-size:26px;line-height:26px;color:#262626;transform:scaleX(0.9000);transform-origin:0 0;">A</div>
<div class="a t" style="left:221.09px;top:213.59px;font-size:26px;line-height:26px;color:#1f6b3e;transform:scaleX(0.8200);transform-origin:0 0;">B</div>
<div class="a t" style="left:338.57px;top:213.59px;font-size:26px;line-height:26px;color:#262626;transform:scaleX(0.8300);transform-origin:0 0;">C</div>
<div class="a t" style="left:456.45px;top:213.59px;font-size:26px;line-height:26px;color:#262626;transform:scaleX(0.8200);transform-origin:0 0;">D</div>
<div class="a t" style="left:574.71px;top:213.59px;font-size:26px;line-height:26px;color:#262626;transform:scaleX(0.8500);transform-origin:0 0;">E</div>
<div class="a t" style="left:693.32px;top:213.59px;font-size:26px;line-height:26px;color:#262626;transform:scaleX(0.8500);transform-origin:0 0;">F</div>
<div class="a t" style="left:810.16px;top:213.59px;font-size:26px;line-height:26px;color:#262626;transform:scaleX(0.8500);transform-origin:0 0;">G</div>
<div class="a t" style="left:19.42px;top:250.23px;font-size:25px;line-height:25px;color:#1f6b3e;transform:scaleX(0.9000);transform-origin:0 0;">1</div>
<div class="a t" style="left:19.76px;top:287.23px;font-size:25px;line-height:25px;color:#1f6b3e;transform:scaleX(0.9000);transform-origin:0 0;">2</div>
<div class="a t" style="left:19.81px;top:324.23px;font-size:25px;line-height:25px;color:#1f6b3e;transform:scaleX(0.9000);transform-origin:0 0;">3</div>
<div class="a t" style="left:19.81px;top:361.23px;font-size:25px;line-height:25px;color:#1f6b3e;transform:scaleX(0.9000);transform-origin:0 0;">4</div>
<div class="a t" style="left:19.76px;top:398.23px;font-size:25px;line-height:25px;color:#1f6b3e;transform:scaleX(0.9000);transform-origin:0 0;">5</div>
<div class="a t" style="left:19.64px;top:435.23px;font-size:25px;line-height:25px;color:#1f6b3e;transform:scaleX(0.9000);transform-origin:0 0;">6</div>
<div class="a t" style="left:19.76px;top:472.23px;font-size:25px;line-height:25px;color:#1f6b3e;transform:scaleX(0.9000);transform-origin:0 0;">7</div>
<div class="a t" style="left:19.76px;top:509.23px;font-size:25px;line-height:25px;color:#1f6b3e;transform:scaleX(0.9000);transform-origin:0 0;">8</div>
<div class="a t" style="left:19.76px;top:546.23px;font-size:25px;line-height:25px;color:#1f6b3e;transform:scaleX(0.9000);transform-origin:0 0;">9</div>
<div class="a t" style="left:13.06px;top:583.23px;font-size:25px;line-height:25px;color:#1f6b3e;transform:scaleX(0.9000);transform-origin:0 0;">10</div>
<div class="a t" style="left:56.15px;top:251.28px;font-size:24px;line-height:24px;color:#000;font-weight:bold;transform:scaleX(0.9921);transform-origin:0 0;">Names</div>
<div class="a t" style="left:55.72px;top:288.28px;font-size:24px;line-height:24px;color:#000;transform:scaleX(1.0300);transform-origin:0 0;">Daniel</div>
<div class="a t" style="left:56.54px;top:325.28px;font-size:24px;line-height:24px;color:#000;transform:scaleX(0.9626);transform-origin:0 0;">Chidera</div>
<div class="a t" style="left:55.47px;top:362.28px;font-size:24px;line-height:24px;color:#000;transform:scaleX(0.9530);transform-origin:0 0;">Peace</div>
<div class="a t" style="left:57.30px;top:399.28px;font-size:24px;line-height:24px;color:#000;transform:scaleX(1.0106);transform-origin:0 0;">Anita</div>
<div class="a t" style="left:56.54px;top:436.28px;font-size:24px;line-height:24px;color:#000;transform:scaleX(0.9626);transform-origin:0 0;">Chidera</div>
<svg class="a" style="left:288px;top:383px;" width="120" height="14" viewBox="0 0 120 14"><path d="M10 6H117.5V9H10Z" fill="#000"/><path d="M0.7 6.5L17 1.2L13 6.5L17 12.5Z" fill="#000"/></svg>
<div class="a t" style="left:413.75px;top:378.13px;font-size:25px;line-height:25px;color:#111;font-weight:bold;transform:scaleX(1.0491);transform-origin:0 0;">Column data deleted</div>
<svg class="a" style="left:452px;top:427px;" width="18" height="17" viewBox="0 0 18 17"><path d="M5.5 1.5H11.5V5.5H15.5V11.5H11.5V15.5H5.5V11.5H1.5V5.5H5.5Z" fill="#000" transform="translate(1,1)"/><path d="M5.5 1.5H11.5V5.5H15.5V11.5H11.5V15.5H5.5V11.5H1.5V5.5H5.5Z" fill="#fff" stroke="#000" stroke-width="1.3"/></svg>
<div class="a" style="left:922px;top:208px;width:21px;height:397px;background:#e6e6e6;"></div>
<div class="a" style="left:925px;top:210px;width:15px;height:15px;background:#fff;border:1px solid #ababab"></div>
<svg class="a" style="left:928px;top:214px;" width="9" height="6" viewBox="0 0 9 6"><path d="M0.5 5.5L4.5 1L8.5 5.5Z" fill="#606060"/></svg>
<div class="a" style="left:925px;top:225px;width:15px;height:366px;background:#d4d4d4;"></div>
<div class="a" style="left:925px;top:225px;width:15px;height:273px;background:#fff;border:1px solid #ababab"></div>
<div class="a" style="left:925px;top:590px;width:15px;height:15px;background:#fff;border:1px solid #ababab"></div>
<svg class="a" style="left:928px;top:596px;" width="9" height="6" viewBox="0 0 9 6"><path d="M0.5 0.5L4.5 5L8.5 0.5Z" fill="#606060"/></svg>
<svg class="a" style="left:27px;top:613px;" width="6" height="9" viewBox="0 0 6 9"><path d="M5 0.8V8.2L0.8 4.5Z" fill="#c2c2c2"/></svg>
<svg class="a" style="left:56px;top:613px;" width="6" height="9" viewBox="0 0 6 9"><path d="M1 0.8V8.2L5.2 4.5Z" fill="#c2c2c2"/></svg>
<div class="a" style="left:101px;top:604px;width:65px;height:25px;background:#ffffff;"></div>
<div class="a" style="left:101px;top:604px;width:1px;height:25px;background:#c6c6c6;"></div>
<div class="a" style="left:165px;top:604px;width:1px;height:25px;background:#b8b8b8;"></div>
<div class="a" style="left:101px;top:627px;width:65px;height:2px;background:#217346;"></div>
<div class="a t" style="left:112.83px;top:610.79px;font-size:13px;line-height:13px;color:#217346;font-weight:bold;transform:scaleX(0.9422);transform-origin:0 0;">Sheet1</div>
<svg class="a" style="left:198px;top:609px;" width="18" height="18" viewBox="0 0 18 18"><circle cx="9" cy="9" r="7.4" fill="none" stroke="#707070" stroke-width="1.1"/><path d="M9 5V13M5 9H13" stroke="#6b6b6b" stroke-width="1.6"/></svg>
<div class="a" style="left:566px;top:613.5px;width:2px;height:2px;background:#a0a0a0;"></div>
<div class="a" style="left:566px;top:617.5px;width:2px;height:2px;background:#a0a0a0;"></div>
<div class="a" style="left:566px;top:621.5px;width:2px;height:2px;background:#a0a0a0;"></div>
<div class="a" style="left:583px;top:611px;width:15px;height:15px;background:#fff;border:1px solid #ababab"></div>
<svg class="a" style="left:586px;top:614px;" width="6" height="9" viewBox="0 0 6 9"><path d="M5.5 0.5L1 4.5L5.5 8.5Z" fill="#606060"/></svg>
<div class="a" style="left:598px;top:611px;width:309px;height:15px;background:#d4d4d4;"></div>
<div class="a" style="left:597px;top:611px;width:289px;height:15px;background:#fff;border:1px solid #ababab"></div>
<div class="a" style="left:907px;top:611px;width:15px;height:15px;background:#fff;border:1px solid #ababab"></div>
<svg class="a" style="left:912px;top:614px;" width="6" height="9" viewBox="0 0 6 9"><path d="M0.5 0.5L5 4.5L0.5 8.5Z" fill="#606060"/></svg>
<div class="a" style="left:1px;top:632px;width:942px;height:1px;background:#c8c6c4;"></div>
<div class="a t" style="left:8.54px;top:637.54px;font-size:12px;line-height:12px;color:#444444;transform:scaleX(0.8926);transform-origin:0 0;">Ready</div>
<div class="a t" style="left:55.14px;top:637.54px;font-size:12px;line-height:12px;color:#444444;transform:scaleX(0.9757);transform-origin:0 0;">Workbook Statistics</div>
<svg class="a" style="left:176px;top:635px;" width="18" height="17" viewBox="0 0 18 17"><g fill="none" stroke="#3c3c3c" stroke-width="1.05" stroke-linecap="round"><circle cx="7.9" cy="3.4" r="1.9"/><path d="M5.9 5.3C4.5 4.5 2.2 4.2 2.2 5.8C2.2 7.2 4.2 7.3 5.5 7.6C5.6 10 5.4 12 4.9 13.8C4.8 14.6 5.6 14.9 6.6 14.6"/><path d="M9.9 5.3C11.3 4.5 13.6 4.2 13.6 5.8C13.6 7.2 11.9 7.3 10.5 7.6V9.6"/><path d="M8.3 11.2L11.4 14.6L16.6 9.2"/></g></svg>
<div class="a t" style="left:196.50px;top:637.54px;font-size:12px;line-height:12px;color:#444444;transform:scaleX(0.9617);transform-origin:0 0;">Accessibility: Good to go</div>
<div class="a" style="left:633px;top:633px;width:39px;height:21px;background:#d4d4d4;"></div>
<svg class="a" style="left:645px;top:636px;" width="13" height="13" viewBox="0 0 13 13"><g fill="none" stroke="#424242" stroke-width="1"><rect x="0.5" y="0.5" width="12" height="12"/><path d="M4.5 0.5V12.5M8.5 0.5V12.5M0.5 4.5H12.5M0.5 8.5H12.5"/></g></svg>
<svg class="a" style="left:685px;top:636px;" width="14" height="13" viewBox="0 0 14 13"><g fill="none" stroke="#424242" stroke-width="1"><rect x="0.5" y="0.5" width="13" height="12"/><rect x="3.5" y="2.5" width="7" height="8"/><path d="M5 4.5H9M5 6.5H9M5 8.5H9"/></g></svg>
<svg class="a" style="left:725px;top:636px;" width="14" height="13" viewBox="0 0 14 13"><g fill="none" stroke="#424242" stroke-width="1"><path d="M0.5 0.5H13.5V12.5H0.5Z M3.5 0.5V8.5H13.5 M5.5 0.5V6.5H8.5V0.5"/></g></svg>
<div class="a" style="left:758px;top:643px;width:8px;height:1px;background:#555555;"></div>
<div class="a" style="left:771px;top:643px;width:100px;height:1px;background:#7a7a7a;"></div>
<div class="a" style="left:821px;top:640px;width:1px;height:7px;background:#7a7a7a;"></div>
<div class="a" style="left:832px;top:638px;width:5px;height:11px;background:#6b6b6b;"></div>
<div class="a" style="left:876px;top:643px;width:9px;height:1px;background:#555555;"></div>
<div class="a" style="left:880px;top:639px;width:1px;height:9px;background:#555555;"></div>
<div class="a t" style="left:896.89px;top:637.54px;font-size:12px;line-height:12px;color:#444444;transform:scaleX(0.8980);transform-origin:0 0;">184%</div>
<div class="a" style="left:0px;top:0px;width:1px;height:655px;background:#217346;"></div>
<div class="a" style="left:943px;top:0px;width:1px;height:655px;background:#217346;"></div>
<div class="a" style="left:0px;top:654px;width:944px;height:1px;background:#217346;"></div>
</body></html>
